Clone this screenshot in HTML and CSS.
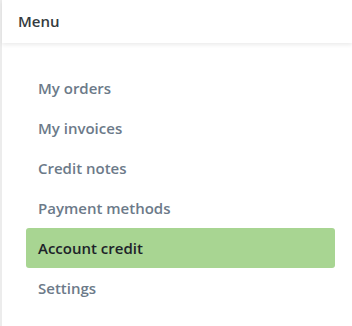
FILE: index.html
```html
<!DOCTYPE html>
<html lang="en">
<head>
    <meta charset="UTF-8">
    <meta name="viewport" content="width=device-width, initial-scale=1.0">
    <title>Menu</title>
    <link rel="stylesheet" href="styles.css">
</head>
<body>
    <div class="sidebar">
        <div class="sidebar-header">Menu</div>
        <ul class="menu">
            <li><a href="#">My orders</a></li>
            <li><a href="#">My invoices</a></li>
            <li><a href="#">Credit notes</a></li>
            <li><a href="#">Payment methods</a></li>
            <li class="active"><a href="#">Account credit</a></li>
            <li><a href="#">Settings</a></li>
        </ul>
    </div>
</body>
</html>
```

FILE: styles.css
```css
body {
    font-family: "Open Sans", "Noto Sans", Arial, sans-serif;
    margin: 0;
    background-color: #fff;
}
.sidebar {
    min-height: 326px;
    border-left: 2px solid #ececec;
    box-sizing: border-box;
}
.sidebar-header {
    height: 43px;
    line-height: 42px;
    padding-left: 16px;
    font-size: 15px;
    font-weight: 600;
    color: #343a40;
    box-shadow: 0 2px 4px rgba(0,0,0,0.08);
}
.menu {
    list-style-type: none;
    margin: 0;
    padding: 25px 17px 0 24px;
}
.menu li a {
    display: block;
    height: 40px;
    line-height: 40px;
    padding-left: 12px;
    border-radius: 3px;
    font-size: 15px;
    font-weight: 600;
    color: #6c7a89;
    text-decoration: none;
}
.menu li.active a {
    background-color: #a8d592;
    color: #1d2329;
}
```
